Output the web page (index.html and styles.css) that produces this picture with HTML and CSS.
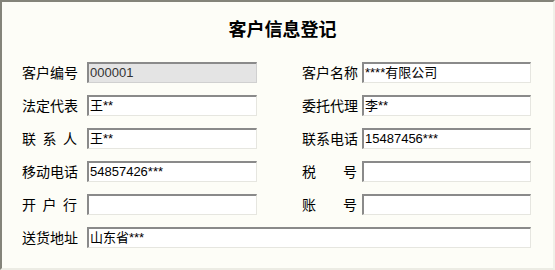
FILE: index.html
```html
<!DOCTYPE html>
<html lang="zh">
<head>
<meta charset="utf-8">
<link rel="stylesheet" href="styles.css">
</head>
<body>
<div class="frame">
  <h1 class="title">客户信息登记</h1>
  <div class="form">
    <div class="row">
      <div class="field">
        <span class="label">客户编号</span>
        <div class="input disabled">000001</div>
      </div>
      <div class="field right">
        <span class="label">客户名称</span>
        <div class="input">****有限公司</div>
      </div>
    </div>
    <div class="row">
      <div class="field">
        <span class="label">法定代表</span>
        <div class="input">王**</div>
      </div>
      <div class="field right">
        <span class="label">委托代理</span>
        <div class="input">李**</div>
      </div>
    </div>
    <div class="row">
      <div class="field">
        <span class="label spread"><span>联</span><span>系</span><span>人</span></span>
        <div class="input">王**</div>
      </div>
      <div class="field right">
        <span class="label">联系电话</span>
        <div class="input">15487456***</div>
      </div>
    </div>
    <div class="row">
      <div class="field">
        <span class="label">移动电话</span>
        <div class="input">54857426***</div>
      </div>
      <div class="field right">
        <span class="label spread"><span>税</span><span>号</span></span>
        <div class="input"></div>
      </div>
    </div>
    <div class="row">
      <div class="field">
        <span class="label spread"><span>开</span><span>户</span><span>行</span></span>
        <div class="input"></div>
      </div>
      <div class="field right">
        <span class="label spread"><span>账</span><span>号</span></span>
        <div class="input"></div>
      </div>
    </div>
    <div class="row">
      <div class="field wide">
        <span class="label">送货地址</span>
        <div class="input">山东省***</div>
      </div>
    </div>
  </div>
</div>
</body>
</html>
```

FILE: styles.css
```css
html, body {
  margin: 0;
  padding: 0;
  background: #fdfdf7;
}
.frame {
  box-sizing: border-box;
  width: 555px;
  height: 270px;
  background: #fdfdf7;
  border-style: solid;
  border-width: 2px;
  border-color: #84847a #f0f0e8 #ecece4 #84847a;
  font-family: "Noto Sans CJK SC", "Liberation Sans", sans-serif;
  color: #000;
}
.title {
  margin: 0;
  padding-top: 15px;
  height: 22px;
  line-height: 22px;
  text-align: center;
  font-size: 18px;
  font-weight: bold;
  padding-left: 10px;
}
.form {
  padding-top: 23px;
  padding-left: 20px;
  display: flex;
  flex-direction: column;
  gap: 12px;
}
.row {
  display: flex;
  height: 21px;
}
.field {
  display: flex;
  align-items: center;
}
.field.right {
  margin-left: 45px;
}
.label {
  width: 55px;
  font-size: 14px;
  line-height: 21px;
  margin-right: 10px;
  white-space: nowrap;
}
.right .label {
  margin-right: 5px;
}
.label.spread {
  display: flex;
  justify-content: space-between;
}
.input {
  box-sizing: border-box;
  width: 170px;
  height: 21px;
  background: #fff;
  border-style: solid;
  border-width: 2px 1px 1px 2px;
  border-color: #8a8a8a #e6e6e0 #e6e6e0 #8a8a8a;
  padding-left: 1px;
  font-family: "Liberation Sans", "Noto Sans CJK SC", sans-serif;
  font-size: 13px;
  line-height: 18px;
  color: #000;
  white-space: nowrap;
  overflow: hidden;
}
.right .input {
  width: 169px;
}
.input.disabled {
  background: #e4e4e4;
  color: #333;
  border-color: #8a8a8a #d0d0d0 #d0d0d0 #8a8a8a;
}
.wide .input {
  width: 444px;
}
```
